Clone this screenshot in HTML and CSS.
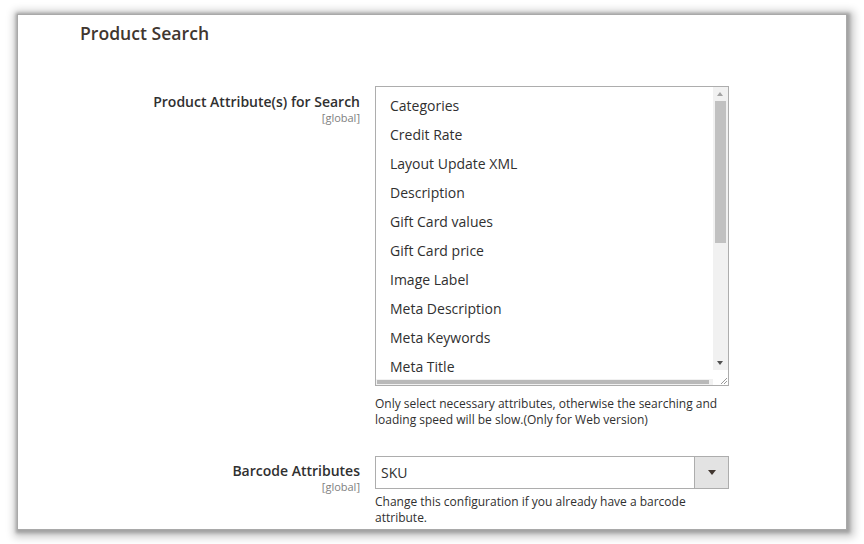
FILE: index.html
```
<!DOCTYPE html>
<html>
<head>
<meta charset="utf-8">
<link rel="stylesheet" href="styles.css">
</head>
<body>
<div class="frame">
  <h2 class="title">Product Search</h2>
  <div class="row row-first">
    <div class="label">
      <span class="label-text">Product Attribute(s) for Search</span>
      <span class="scope">[global]</span>
    </div>
    <div class="control">
      <div class="multiselect">
        <div class="options">
          <div class="opt">Categories</div>
          <div class="opt">Credit Rate</div>
          <div class="opt">Layout Update XML</div>
          <div class="opt">Description</div>
          <div class="opt">Gift Card values</div>
          <div class="opt">Gift Card price</div>
          <div class="opt">Image Label</div>
          <div class="opt">Meta Description</div>
          <div class="opt">Meta Keywords</div>
          <div class="opt">Meta Title</div>
        </div>
        <div class="vscroll">
          <div class="arrow up"></div>
          <div class="vtrack"><div class="vthumb"></div></div>
          <div class="arrow down"></div>
        </div>
        <div class="hscroll"><div class="hthumb"></div></div>
        <div class="corner">
          <svg width="10" height="10" viewBox="0 0 10 10"><path d="M9 3L3 9M9 6L6 9" stroke="#9a9a9a" stroke-width="1" fill="none"/></svg>
        </div>
      </div>
      <p class="note">Only select necessary attributes, otherwise the searching and loading speed will be slow.(Only for Web version)</p>
    </div>
  </div>
  <div class="row row-second">
    <div class="label">
      <span class="label-text">Barcode Attributes</span>
      <span class="scope">[global]</span>
    </div>
    <div class="control">
      <div class="select">
        <span class="select-value">SKU</span>
        <span class="select-btn"><span class="tri"></span></span>
      </div>
      <p class="note">Change this configuration if you already have a barcode attribute.</p>
    </div>
  </div>
</div>
</body>
</html>
```
FILE: styles.css
```
html, body {
  margin: 0;
  padding: 0;
  background: #ffffff;
  overflow: hidden;
}
body {
  width: 864px;
  height: 544px;
  font-family: "Open Sans", "Noto Sans", sans-serif;
  color: #303030;
}
.frame {
  margin: 15px 0 0 18px;
  width: 828px;
  height: 514px;
  background: #ffffff;
  box-shadow: 0 0 0 1px #a9a9a9, 1px 1px 3px 3px #a2a2a2, 2px 2px 8px 6px rgba(0, 0, 0, 0.22);
  overflow: hidden;
}
.title {
  margin: 0;
  padding: 7px 0 0 62px;
  font-size: 17.6px;
  line-height: 22px;
  font-weight: 600;
  color: #41362f;
}
.row {
  display: grid;
  grid-template-columns: 342px 354px;
  column-gap: 15px;
}
.row-first {
  margin-top: 42px;
}
.row-second {
  margin-top: 28px;
}
.label {
  display: flex;
  flex-direction: column;
  align-items: flex-end;
  padding-top: 7px;
}
.label-text {
  font-size: 14px;
  font-weight: 600;
  line-height: 18px;
  color: #303030;
}
.scope {
  font-size: 11px;
  line-height: 14px;
  color: #808080;
}
.row-second .label {
  padding-top: 6px;
}
.multiselect {
  position: relative;
  height: 298px;
  border: 1px solid #adadad;
  overflow: hidden;
}
.options {
  padding: 4px 0 0 14px;
}
.opt {
  height: 29px;
  line-height: 29px;
  font-size: 14px;
  color: #303030;
}
.vscroll {
  position: absolute;
  top: 0;
  right: 0;
  width: 15px;
  bottom: 15px;
  background: #f1f1f1;
  display: flex;
  flex-direction: column;
}
.arrow {
  height: 14px;
  position: relative;
}
.arrow::after {
  content: "";
  position: absolute;
  left: 4px;
  width: 0;
  height: 0;
  border-left: 3.5px solid transparent;
  border-right: 3.5px solid transparent;
}
.arrow.up::after {
  top: 5px;
  border-bottom: 4px solid #a3a3a3;
}
.arrow.down::after {
  top: 5px;
  border-top: 4px solid #505050;
}
.vtrack {
  flex: 1;
  padding: 0 2px;
}
.vthumb {
  height: 142px;
  background: #c1c1c1;
}
.hscroll {
  position: absolute;
  left: 0;
  right: 15px;
  bottom: 0;
  height: 6px;
  padding: 1px 4px 1px 1px;
  box-sizing: border-box;
  background: #f1f1f1;
}
.hthumb {
  height: 4px;
  background: #b9b9b9;
}
.corner {
  position: absolute;
  right: 0;
  bottom: 0;
  width: 15px;
  height: 15px;
  background: #ffffff;
  display: flex;
  align-items: flex-end;
  justify-content: flex-end;
}
.corner svg {
  display: block;
}
.note {
  margin: 10px 0 0 0;
  font-size: 12px;
  line-height: 16px;
  color: #303030;
}
.row-second .note {
  margin-top: 5px;
}
.select {
  display: flex;
  height: 33px;
  border: 1px solid #adadad;
  box-sizing: border-box;
}
.select-value {
  flex: 1;
  padding-left: 5px;
  font-size: 14px;
  line-height: 31px;
  color: #303030;
}
.select-btn {
  width: 33px;
  background: #e3e3e3;
  border-left: 1px solid #adadad;
  display: flex;
  align-items: center;
  justify-content: center;
}
.tri {
  width: 0;
  height: 0;
  border-left: 4px solid transparent;
  border-right: 4px solid transparent;
  border-top: 5px solid #41362f;
}
```
